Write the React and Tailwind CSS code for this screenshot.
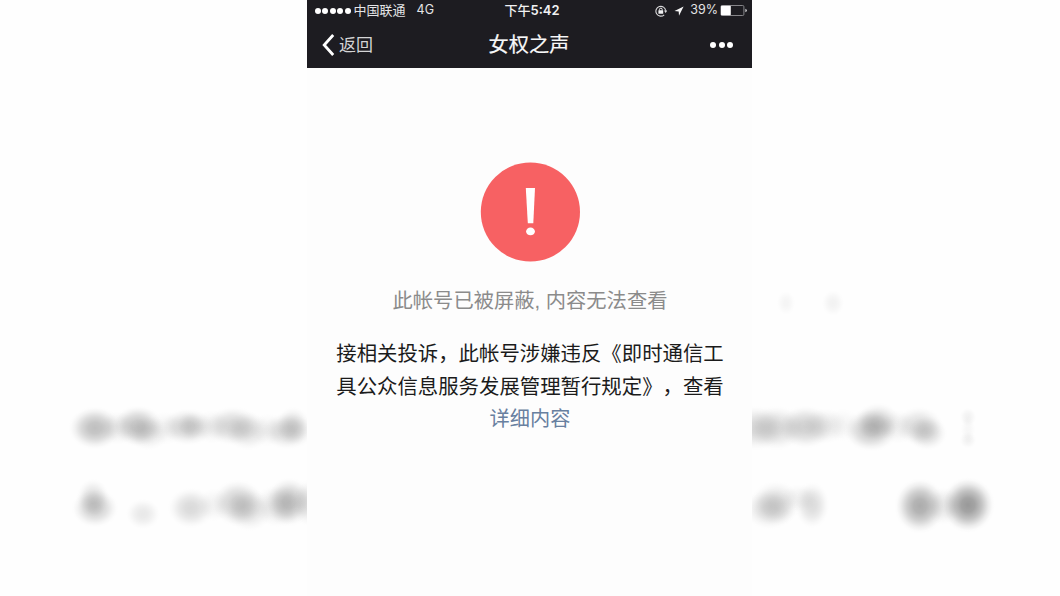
import * as React from "react";

// Soft shapes behind the phone screen: [cx, cy, rx, ry, opacity]
const backdropShapes = [
  // first line, left
  [95, 428, 27, 22, 0.26],
  [118, 428, 20, 18, 0.07],
  [138, 426, 26, 21, 0.24],
  [148, 433, 23, 18, 0.1],
  [166, 428, 20, 18, 0.05],
  [188, 427, 28, 19, 0.18],
  [191, 426, 15, 15, 0.08],
  [212, 427, 20, 18, 0.06],
  [233, 426, 29, 20, 0.17],
  [248, 431, 24, 20, 0.12],
  [268, 430, 20, 18, 0.05],
  [293, 426, 18, 20, 0.13],
  [288, 431, 27, 19, 0.16],
  // second line, left
  [93, 498, 17, 20, 0.13],
  [95, 508, 24, 20, 0.2],
  [143, 514, 18, 16, 0.09],
  [191, 508, 24, 21, 0.15],
  [214, 505, 18, 18, 0.05],
  [238, 503, 27, 24, 0.2],
  [249, 510, 25, 22, 0.12],
  [278, 506, 26, 22, 0.11],
  [289, 502, 24, 25, 0.24],
  [308, 503, 16, 24, 0.12],
  // first line, right
  [756, 428, 30, 23, 0.15],
  [776, 428, 30, 23, 0.15],
  [806, 427, 29, 22, 0.19],
  [825, 426, 24, 19, 0.08],
  [842, 425, 20, 18, 0.04],
  [871, 430, 28, 22, 0.23],
  [878, 422, 24, 20, 0.16],
  [898, 427, 20, 18, 0.06],
  [919, 426, 25, 20, 0.14],
  [927, 433, 21, 18, 0.15],
  [968, 417, 9, 10, 0.05],
  [968, 429, 8, 15, 0.03],
  [968, 440, 9, 9, 0.05],
  // second line, right
  [776, 503, 26, 23, 0.13],
  [770, 509, 27, 21, 0.14],
  [799, 498, 20, 15, 0.05],
  [812, 505, 18, 24, 0.14],
  [920, 506, 26, 28, 0.34],
  [943, 506, 18, 20, 0.09],
  [968, 505, 27, 28, 0.42],
  [786, 303, 10, 13, 0.04],
  [833, 303, 12, 14, 0.05],
];

function Backdrop() {
  return (
    <svg
      className="absolute inset-0"
      width="1060"
      height="596"
      viewBox="0 0 1060 596"
      aria-hidden="true"
    >
      <defs>
        <radialGradient id="soft">
          <stop offset="0" stopColor="#000" stopOpacity="0.95" />
          <stop offset="0.25" stopColor="#000" stopOpacity="0.85" />
          <stop offset="0.5" stopColor="#000" stopOpacity="0.56" />
          <stop offset="0.75" stopColor="#000" stopOpacity="0.18" />
          <stop offset="0.9" stopColor="#000" stopOpacity="0.03" />
          <stop offset="1" stopColor="#000" stopOpacity="0" />
        </radialGradient>
      </defs>
      {backdropShapes.map(([cx, cy, rx, ry, opacity], i) => (
        <ellipse key={i} cx={cx} cy={cy} rx={rx} ry={ry} opacity={opacity} fill="url(#soft)" />
      ))}
    </svg>
  );
}

function SignalDots() {
  return (
    <div className="flex gap-[1.4px]">
      {[0, 1, 2, 3, 4].map((i) => (
        <span key={i} className="size-[6px] rounded-full bg-white" />
      ))}
    </div>
  );
}

function RotationLockIcon() {
  return (
    <svg width="12" height="12" viewBox="0 0 12 12" fill="none">
      <path d="M9.2 9.8A4.9 4.9 0 1 1 10.7 5.8" stroke="#d8d8da" strokeWidth="1.1" />
      <path d="M9 5.6h3.2L10.6 8z" fill="#d8d8da" />
      <rect x="3.4" y="5.2" width="4.8" height="3.6" rx="0.4" fill="#f0f0f2" />
      <path d="M4.4 5.4V4.6a1.4 1.4 0 0 1 2.8 0v.8" stroke="#f0f0f2" strokeWidth="1" />
    </svg>
  );
}

function LocationIcon() {
  return (
    <svg width="10" height="10" viewBox="0 0 10 10">
      <path d="M9.6.4.5 5l4.2.4.3 4.4z" fill="#f4f4f5" />
    </svg>
  );
}

function BatteryIcon() {
  return (
    <svg width="28" height="11" viewBox="0 0 28 11" fill="none">
      <rect x="0.9" y="0.5" width="23" height="10" rx="1.2" stroke="#929295" strokeWidth="0.9" />
      <rect x="1" y="0.8" width="9.8" height="9.4" rx="0.6" fill="#fff" />
      <path d="M25.4 3.8v3.4q1.5-.4 1.5-1.7t-1.5-1.7z" fill="#d8d8da" />
    </svg>
  );
}

function StatusBar() {
  return (
    <div className="grid h-[21px] grid-cols-[1fr_auto_1fr] items-center pr-[4px] pl-[8px] font-[Inter,'Noto_Sans_CJK_SC',sans-serif] text-[13px] leading-none text-[#e4e4e6]">
      <div className="flex items-center">
        <SignalDots />
        <span className="ml-[3px]">中国联通</span>
        <span className="ml-[11px] text-[12.5px]">4G</span>
      </div>
      <div className="pl-[1px] font-medium text-[#f1f1f2]">
        下午<span className="text-[13px] font-semibold">5:42</span>
      </div>
      <div className="flex items-center justify-end">
        <RotationLockIcon />
        <span className="ml-[7px]">
          <LocationIcon />
        </span>
        <span className="ml-[6px] text-[12.5px]">39%</span>
        <span className="ml-[2px]">
          <BatteryIcon />
        </span>
      </div>
    </div>
  );
}

function NavBar() {
  return (
    <div className="grid h-[47px] grid-cols-[1fr_auto_1fr] items-center pr-[19px] pl-[14px]">
      <button className="flex items-center text-[17px] leading-none text-[#d4d4d6]">
        <svg width="14" height="22" viewBox="0 0 14 22" fill="none">
          <path d="M12.2 1 3.2 11l9 10" stroke="#fff" strokeWidth="2.8" />
        </svg>
        <span className="mt-[2px] ml-[4px]">返回</span>
      </button>
      <h1 className="pt-[2px] pl-[4px] text-[20.2px] leading-none text-[#f8f8f9] [-webkit-text-stroke:0.2px]">
        女权之声
      </h1>
      <button className="flex justify-end gap-[2.5px]" aria-label="更多">
        {[0, 1, 2].map((i) => (
          <span key={i} className="size-[6px] rounded-full bg-white" />
        ))}
      </button>
    </div>
  );
}

function AlertIcon() {
  return (
    <svg width="100" height="100" viewBox="0 0 100 100">
      <circle cx="50.4" cy="50" r="49.6" fill="#f76163" />
      <path d="M45.8 26h9.2l-1.7 35.2h-5.5z" fill="#fff" />
      <ellipse cx="50.5" cy="69.4" rx="4.4" ry="3.9" fill="#fff" />
    </svg>
  );
}

export default function App() {
  return (
    <div className="relative flex h-[596px] w-[1060px] overflow-hidden bg-[#fefefe] pl-[307px] font-['Liberation_Sans','Noto_Sans_CJK_SC',sans-serif] [text-spacing-trim:space-all]">
      <Backdrop />
      <main className="relative flex h-full w-[445px] flex-col bg-[#fdfdfd]">
        <header className="h-[68px] bg-[#1d1c21]">
          <StatusBar />
          <NavBar />
        </header>
        <section className="flex flex-col items-center pt-[94px] pl-[1px] whitespace-nowrap">
          <AlertIcon />
          <p className="mt-[23px] text-[20.3px] leading-[32px] text-[#8b8b8b]">
            此帐号已被屏蔽, 内容无法查看
          </p>
          <p className="mt-[21px] text-[20.4px] leading-[32.5px] text-[#1b1b1b]">
            接相关投诉，此帐号涉嫌违反《即时通信工
            <br />
            具公众信息服务发展管理暂行规定》，查看
          </p>
          <a className="text-[20.2px] leading-[32.5px] text-[#6880a0]">详细内容</a>
        </section>
      </main>
    </div>
  );
}
